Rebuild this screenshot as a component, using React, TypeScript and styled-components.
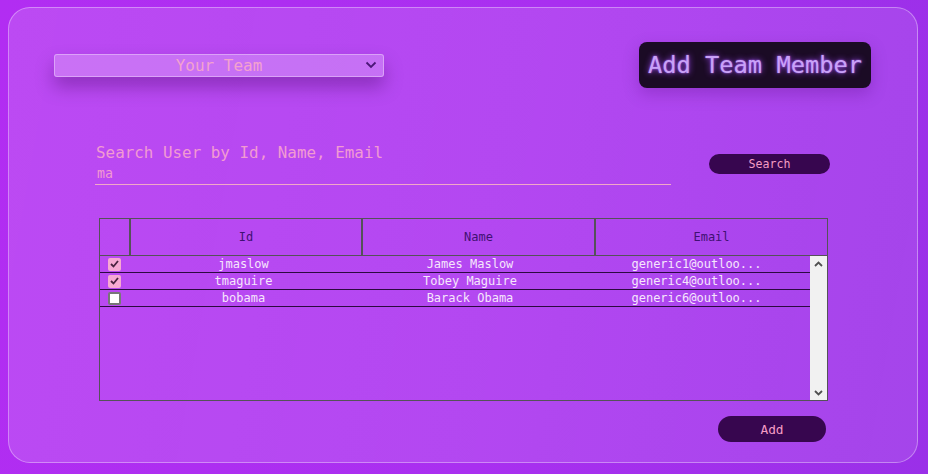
import styled, { createGlobalStyle } from "styled-components";

const GlobalStyle = createGlobalStyle`
  html, body {
    margin: 0;
    padding: 0;
    height: 100%;
  }
  body {
    background: linear-gradient(100deg, #b22df2 0%, #a92ff0 55%, #9a30e8 100%);
    font-family: "DejaVu Sans Mono", "Liberation Mono", monospace;
    overflow: hidden;
  }
`;

const Card = styled.div`
  margin: 7px 10px 0 8px;
  height: 454px;
  border: 1px solid rgba(255, 255, 255, 0.35);
  border-radius: 22px;
  background: linear-gradient(100deg, rgba(255, 255, 255, 0.14), rgba(255, 255, 255, 0.1));
  display: flex;
  flex-direction: column;
  box-sizing: content-box;
`;

const TopRow = styled.div`
  display: flex;
  align-items: center;
  justify-content: space-between;
  padding: 34px 46px 0 45px;
  height: 46px;
`;

const TeamSelect = styled.div`
  position: relative;
  width: 328px;
  height: 21px;
  border: 1px solid rgba(255, 255, 255, 0.35);
  border-radius: 3px;
  background: rgba(255, 255, 255, 0.22);
  box-shadow: 0 10px 18px rgba(60, 0, 90, 0.35);
  display: flex;
  align-items: center;
  justify-content: center;
  color: #f4a2cf;
  font-size: 16px;
`;

const Chevron = styled.svg`
  position: absolute;
  right: 6px;
  top: 6px;
`;

const GlowButton = styled.button`
  width: 232px;
  height: 46px;
  border: none;
  border-radius: 8px;
  background: #1b0b25;
  color: #c9a2f7;
  font-family: inherit;
  font-size: 23.7px;
  text-shadow: 0 0 6px #a34cff, 0 0 2px #b070ff;
  padding: 0;
  box-shadow: 0 6px 16px rgba(70, 0, 110, 0.25);
`;

const SearchRow = styled.div`
  display: flex;
  align-items: center;
  padding: 55px 0 0 86px;
  gap: 38px;
`;

const SearchField = styled.div`
  width: 576px;
  display: flex;
  flex-direction: column;
`;

const SearchLabel = styled.label`
  color: #f29ad2;
  font-size: 15.9px;
  line-height: 20px;
  padding-left: 1px;
`;

const SearchInput = styled.div`
  height: 21px;
  border-bottom: 1px solid #f2a8c8;
  color: #f39ad0;
  font-size: 13.3px;
  line-height: 22px;
  padding-left: 2px;
`;

const PillButton = styled.button<{ $w: number; $h: number; $size: number }>`
  width: ${(p) => p.$w}px;
  height: ${(p) => p.$h}px;
  border: none;
  border-radius: ${(p) => p.$h / 2}px;
  background: #37064f;
  color: #f49cc4;
  font-family: inherit;
  font-size: ${(p) => p.$size}px;
  padding: 0;
`;

const Table = styled.div`
  margin: 33px 0 0 90px;
  width: 727px;
  height: 181px;
  border: 1px solid #555258;
  display: flex;
  flex-direction: column;
`;

const HeadRow = styled.div`
  display: grid;
  grid-template-columns: 31px 232px 233px 1fr;
  height: 37px;
  border-bottom: 1px solid #555258;
  box-sizing: border-box;
`;

const HeadCell = styled.div<{ $last?: boolean }>`
  display: flex;
  align-items: center;
  justify-content: center;
  border-right: ${(p) => (p.$last ? "none" : "2px solid #555258")};
  color: #3f1172;
  font-size: 12px;
`;

const Body = styled.div`
  flex: 1;
  display: flex;
`;

const Rows = styled.div`
  flex: 1;
`;

const ScrollBar = styled.div`
  width: 17px;
  background: #f1f1f1;
  display: flex;
  flex-direction: column;
  justify-content: space-between;
  align-items: center;
  padding: 5px 0 4px;
`;

const BodyRow = styled.div`
  display: grid;
  grid-template-columns: 30px 227px 226px 1fr;
  height: 16px;
  border-bottom: 1px solid #2c0a40;
  align-items: center;
`;

const Cell = styled.div`
  text-align: center;
  color: #f6e6fc;
  font-size: 12px;
  line-height: 16px;
  white-space: nowrap;
`;

const Check = styled.div<{ $on: boolean }>`
  width: 13px;
  height: 13px;
  margin-left: 8px;
  box-sizing: border-box;
  border-radius: 2px;
  background: ${(p) => (p.$on ? "#f7a9d2" : "#ffffff")};
  border: ${(p) => (p.$on ? "none" : "2px solid #777")};
  display: flex;
  align-items: center;
  justify-content: center;
`;

const Footer = styled.div`
  display: flex;
  justify-content: flex-end;
  padding: 15px 91px 0 0;
`;

const users = [
  { id: "jmaslow", name: "James Maslow", email: "generic1@outloo...", on: true },
  { id: "tmaguire", name: "Tobey Maguire", email: "generic4@outloo...", on: true },
  { id: "bobama", name: "Barack Obama", email: "generic6@outloo...", on: false },
];

export default function App() {
  return (
    <>
      <GlobalStyle />
      <Card>
        <TopRow>
          <TeamSelect>
            Your Team
            <Chevron width="12" height="8" viewBox="0 0 12 8">
              <path d="M1.5 1.5 L6 6 L10.5 1.5" fill="none" stroke="#4b1677" strokeWidth="1.8" />
            </Chevron>
          </TeamSelect>
          <GlowButton>Add Team Member</GlowButton>
        </TopRow>
        <SearchRow>
          <SearchField>
            <SearchLabel>Search User by Id, Name, Email</SearchLabel>
            <SearchInput>ma</SearchInput>
          </SearchField>
          <PillButton $w={121} $h={20} $size={11.6}>
            Search
          </PillButton>
        </SearchRow>
        <Table>
          <HeadRow>
            <HeadCell />
            <HeadCell>Id</HeadCell>
            <HeadCell>Name</HeadCell>
            <HeadCell $last>Email</HeadCell>
          </HeadRow>
          <Body>
            <Rows>
              {users.map((u) => (
                <BodyRow key={u.id}>
                  <Check $on={u.on}>
                    {u.on && (
                      <svg width="9" height="8" viewBox="0 0 9 8">
                        <path d="M1 4 L3.5 6.5 L8 1" fill="none" stroke="#4a2340" strokeWidth="1.8" />
                      </svg>
                    )}
                  </Check>
                  <Cell>{u.id}</Cell>
                  <Cell>{u.name}</Cell>
                  <Cell>{u.email}</Cell>
                </BodyRow>
              ))}
            </Rows>
            <ScrollBar>
              <svg width="9" height="6" viewBox="0 0 9 6">
                <path d="M1 5 L4.5 1.5 L8 5" fill="none" stroke="#505050" strokeWidth="1.8" />
              </svg>
              <svg width="9" height="6" viewBox="0 0 9 6">
                <path d="M1 1 L4.5 4.5 L8 1" fill="none" stroke="#505050" strokeWidth="1.8" />
              </svg>
            </ScrollBar>
          </Body>
        </Table>
        <Footer>
          <PillButton $w={108} $h={26} $size={12.8}>
            Add
          </PillButton>
        </Footer>
      </Card>
    </>
  );
}
